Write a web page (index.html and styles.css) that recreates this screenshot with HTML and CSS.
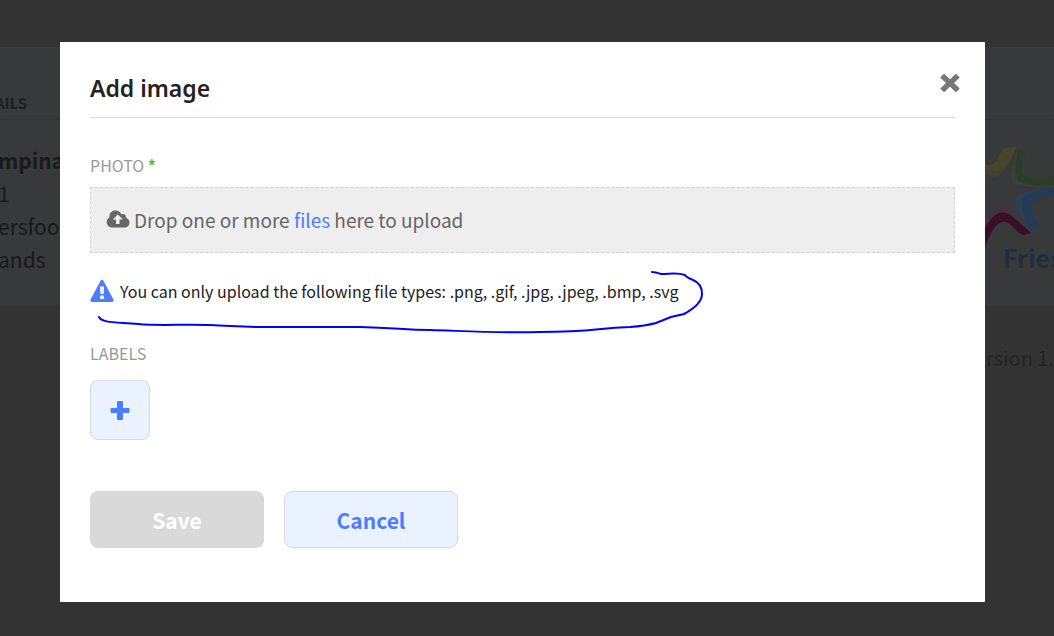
FILE: index.html
```html
<!DOCTYPE html>
<html lang="en">
<head>
<meta charset="utf-8">
<meta name="viewport" content="width=device-width, initial-scale=1">
<title>Add image</title>
<link rel="stylesheet" href="styles.css">
</head>
<body>
<div class="page">
  <section class="card">
    <h2 class="card-title">AILS</h2>
    <div class="card-body">
      <address class="address">
        <strong>mpina</strong>
        <span>1</span>
        <span>ersfoo</span>
        <span>ands</span>
      </address>
      <svg class="brand" viewBox="0 0 74 130" aria-label="Fries">
        <path d="M0 26 Q10 42 20 35 L30 22Z" fill="#424130"/>
        <path d="M0 22 Q12 30 18 18 Q23 6 28 7 L37 7 Q34 14 29 22 C21 35 8 32 0 24Z" fill="#47462a"/>
        <path d="M36 14 Q25 42 36 45 Q44 47 74 46 V40L45 36Z" fill="#354139"/>
        <path d="M39 9 L45 12 Q39 30 44 35 Q50 39 74 36 V45 Q50 47 41 42 C32 36 36 20 39 9Z" fill="#293d28"/>
        <path d="M74 48 C48 51 36 51 35 60 C34 67 42 80 51 88 L55 82 Q43 64 50 56Z" fill="#2d3e4f"/>
        <path d="M74 48 C52 51 41 56 42 66 Q44 80 53 93 L60 87 Q51 75 51 68 C51 58 64 57 74 55Z" fill="#233b55"/>
        <path d="M10 80 Q20 58 30 71 L34 79Z" fill="#452f3a"/>
        <path d="M0 98 C10 74 22 67 33 77 Q39 82 51 93 L44 95 Q40 95 32 86 C22 76 15 86 10 95 L0 118Z" fill="#3a1029"/>
        <text class="brand-name" x="23" y="128">Fries</text>
      </svg>
    </div>
  </section>
  <footer class="version">rsion 1.</footer>
</div>

<div class="overlay">
  <form class="modal" role="dialog" aria-labelledby="title">
    <header class="modal-header">
      <h1 class="modal-title" id="title">Add image</h1>
      <button class="close" type="button" aria-label="Close">
        <svg viewBox="0 0 20 20" width="20" height="20"><path d="M.8 4.500 4 1.200 10 6.800 16 1.200 19.200 4.500 13.500 10 19.200 15.500 16 18.800 10 13.200 4 18.800 .8 15.500 6.500 10Z" fill="#777" stroke="#777" stroke-linejoin="round"/></svg>
      </button>
    </header>

    <div class="label">PHOTO <span class="required">*</span></div>
    <div class="dropzone">
      <svg class="cloud" viewBox="0 0 24 18" width="24" height="18"><path d="M6 17.500a5.500 5.500 0 0 1-2.500-10.300C3 2.500 6.500.5 9.500.5c2.800 0 5 1.500 6 4 2.500-1.300 5 .8 4.200 3.300 2.200.6 3.800 2.300 3.800 4.700 0 3-2.300 5-5 5Z" fill="#666"/><path d="M11.800 4.500 17 9.500H13.500V14H10V9.500H6.700Z" fill="#eee"/></svg>
      <span>Drop one or more <a class="files" href="#">files</a> here to upload</span>
    </div>

    <div class="notice">
      <svg viewBox="0 0 24 24" width="24" height="24"><path d="M10.700 1.500Q12 0 13.300 1.500L23.700 21Q24 23 22 23H2Q0 23 .3 21Z" fill="#4c7dff"/><path d="M10 7.500H14L13.600 15H10.400ZM10.200 16.500H13.800V20H10.200Z" fill="#fff"/></svg>
      <span>You can only upload the following file types: .png, .gif, .jpg, .jpeg, .bmp, .svg</span>
      <svg class="scribble" viewBox="0 0 614 68" width="614" height="68" aria-hidden="true"><path d="M9 48C12 54 25 53 48 55C70 57 92 55 120 56C145 57 150 58 175 58H270C308 59 315 61 340 61C375 62 405 64 450 63C505 63 505 59 540 58Q555 57 566 54L581 48L594 45C605 39 612 32 612 25C612 18 608 13 603 11Q596 8 595 6C587 3 580 5 571 5Q565 3 562 3"/></svg>
    </div>

    <div class="label">LABELS</div>
    <button class="add" type="button" aria-label="Add label">
      <svg viewBox="0 0 20 20" width="20" height="20"><path d="M8 1H12Q13 1 13 2V8H18.500Q19.500 8 19.500 9V12Q19.500 13 18.500 13H13V19Q13 20 12 20H8Q7 20 7 19V13H1.500Q.5 13 .5 12V9Q.5 8 1.500 8H7V2Q7 1 8 1Z" fill="#4c7dff"/></svg>
    </button>

    <div class="actions">
      <button class="button save" type="submit" disabled>Save</button>
      <button class="button cancel" type="button">Cancel</button>
    </div>
  </form>
</div>
</body>
</html>
```
FILE: styles.css
```css
* {
  box-sizing: border-box;
}

body {
  margin: 0;
  overflow: hidden;
  background: #333;
  font-family: "Noto Sans CJK SC", "Noto Sans", sans-serif;
}

.page {
  min-height: 100vh;
  padding-top: 47px;
  color: #191a1b;
}

.card {
  height: 259px;
  background: #38393b;
}

.card-title {
  height: 73px;
  margin: 0;
  padding: 44px 0 0;
  border-bottom: 1px dotted #303133;
  font-size: 15px;
  line-height: 24px;
  color: #1e1f20;
  text-indent: -5px;
}

.card-body {
  display: flex;
  justify-content: space-between;
  padding-top: 20px;
}

.address {
  display: flex;
  flex-direction: column;
  padding-top: 4px;
  font-style: normal;
  font-size: 21px;
  line-height: 33px;
  text-indent: -2px;
}

.brand {
  width: 74px;
  height: 130px;
}

.brand-name {
  font-size: 25px;
  font-weight: bold;
  fill: #202e40;
}

.version {
  padding: 36px 0 0;
  text-align: right;
  font-size: 20px;
  line-height: 32px;
  color: #242424;
}

.overlay {
  position: absolute;
  inset: 0;
  padding: 42px 69px 34px 60px;
}

.modal {
  position: relative;
  height: 100%;
  padding: 30px;
  background: #fff;
}

.modal-header {
  height: 46px;
  margin-bottom: 35px;
  border-bottom: 1px solid #d8d8d8;
}

.modal-title {
  margin: 0;
  font: 600 23px/32px "Noto Sans", sans-serif;
  color: #222;
}

.close {
  position: absolute;
  top: 31px;
  right: 25px;
  display: flex;
  padding: 0;
  border: 0;
  background: none;
}

.label {
  font-size: 16px;
  line-height: 24px;
  color: #999;
}

.required {
  font-weight: bold;
  color: #54c22b;
}

.dropzone {
  display: flex;
  align-items: center;
  gap: 4px;
  height: 66px;
  margin: 10px 0 26px;
  padding: 0 15px 2px;
  border: 1px dashed #d2d2d2;
  background: #eee;
  font-size: 19px;
  color: #666;
}

.files {
  color: #4c7dff;
  text-decoration: none;
}

.notice {
  position: relative;
  display: flex;
  align-items: center;
  gap: 6px;
  height: 24px;
  margin-bottom: 38px;
  font-size: 16px;
  color: #222;
  white-space: nowrap;
}

.scribble {
  position: absolute;
  top: -10px;
  left: 0;
  fill: none;
  stroke: #00f;
  stroke-width: 2;
  stroke-linecap: round;
}

.add,
.cancel {
  border: 1px solid #d5d9e2;
  background: #eaf2ff;
  color: #4c7dff;
}

.add {
  display: flex;
  align-items: center;
  justify-content: center;
  width: 60px;
  height: 60px;
  margin: 15px 0 51px;
  border-radius: 8px;
}

.actions {
  display: flex;
  gap: 20px;
}

.button {
  width: 174px;
  height: 57px;
  padding: 0;
  border-radius: 8px;
  font-family: inherit;
  font-size: 21px;
  font-weight: bold;
}

.save {
  border: 0;
  background: #d9d9d9;
  color: #fff;
}
```
